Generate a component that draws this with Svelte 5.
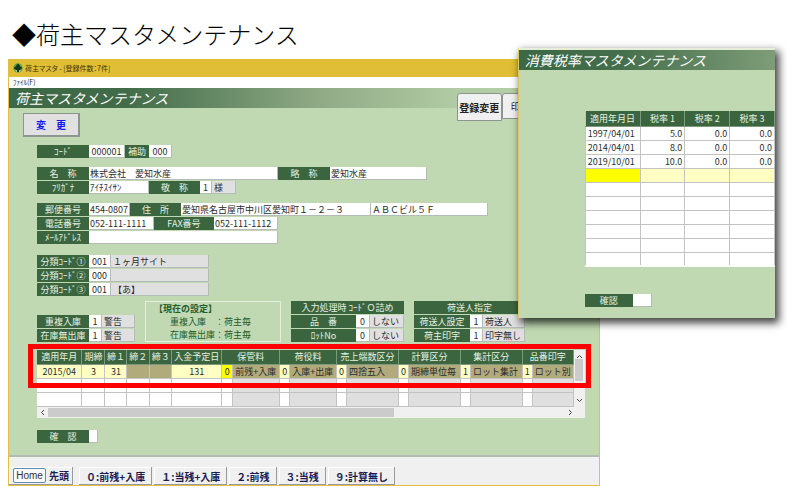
<script lang="ts">
  type Box = { value: string; w: number; grey?: boolean; center?: boolean }
  type Field = { label: string; lw: number; boxes: Box[] }

  const sections: Field[][][] = [
    [
      [
        { label: 'ｺｰﾄﾞ', lw: 52, boxes: [{ value: '000001', w: 36, center: true }] },
        { label: '補助', lw: 24, boxes: [{ value: '000', w: 23, center: true }] },
      ],
    ],
    [
      [
        { label: '名　称', lw: 52, boxes: [{ value: '株式会社　愛知水産', w: 189 }] },
        { label: '略　称', lw: 52, boxes: [{ value: '愛知水産', w: 97 }] },
      ],
      [
        { label: 'ﾌﾘｶﾞﾅ', lw: 52, boxes: [{ value: 'ｱｲﾁｽｲｻﾝ', w: 60 }] },
        { label: '敬　称', lw: 51, boxes: [{ value: '1', w: 12, center: true }, { value: '様', w: 24, grey: true }] },
      ],
    ],
    [
      [
        { label: '郵便番号', lw: 52, boxes: [{ value: '454-0807', w: 41 }] },
        { label: '住　所', lw: 51, boxes: [{ value: '愛知県名古屋市中川区愛知町１－２－３', w: 190 }, { value: 'ＡＢＣビル５Ｆ', w: 117 }] },
      ],
      [
        { label: '電話番号', lw: 52, boxes: [{ value: '052-111-1111', w: 65 }] },
        { label: 'FAX番号', lw: 60, boxes: [{ value: '052-111-1112', w: 64 }] },
      ],
      [{ label: 'ﾒｰﾙｱﾄﾞﾚｽ', lw: 52, boxes: [{ value: '', w: 189 }] }],
    ],
    [
      [{ label: '分類ｺｰﾄﾞ①', lw: 52, boxes: [{ value: '001', w: 22, center: true }, { value: '１ヶ月サイト', w: 98, grey: true }] }],
      [{ label: '分類ｺｰﾄﾞ②', lw: 52, boxes: [{ value: '000', w: 22, center: true }, { value: '', w: 98, grey: true }] }],
      [{ label: '分類ｺｰﾄﾞ③', lw: 52, boxes: [{ value: '001', w: 22, center: true }, { value: '【あ】', w: 98, grey: true }] }],
    ],
  ]

  const stock: Field[] = [
    { label: '重複入庫', lw: 52, boxes: [{ value: '1', w: 13, center: true }, { value: '警告', w: 33, grey: true }] },
    { label: '在庫無出庫', lw: 52, boxes: [{ value: '1', w: 13, center: true }, { value: '警告', w: 33, grey: true }] },
  ]
  const zeroFill: Field[] = [
    { label: '品　番', lw: 65, boxes: [{ value: '0', w: 14, center: true }, { value: 'しない', w: 34, grey: true }] },
    { label: 'ﾛｯﾄNo', lw: 65, boxes: [{ value: '0', w: 14, center: true }, { value: 'しない', w: 34, grey: true }] },
  ]
  const sender: Field[] = [
    { label: '荷送人設定', lw: 56, boxes: [{ value: '1', w: 13, center: true }, { value: '荷送人', w: 42, grey: true }] },
    { label: '荷主印字', lw: 56, boxes: [{ value: '1', w: 13, center: true }, { value: '印字無し', w: 42, grey: true }] },
  ]

  const dates = [
    { head: '適用年月', value: '2015/04' },
    { head: '期締', value: '3' },
    { head: '締１', value: '31' },
    { head: '締２', value: '' },
    { head: '締３', value: '' },
    { head: '入金予定日', value: '131' },
  ]
  const kinds = [
    { head: '保管料', code: '0', name: '前残+入庫' },
    { head: '荷役料', code: '0', name: '入庫+出庫' },
    { head: '売上端数区分', code: '0', name: '四捨五入' },
    { head: '計算区分', code: '0', name: '期締単位毎' },
    { head: '集計区分', code: '1', name: 'ロット集計' },
    { head: '品番印字', code: '1', name: 'ロット別' },
  ]
  const colWidths = [45, 23, 22, 23, 22, 50, 11, 47, 10, 47, 10, 52, 10, 52, 10, 52, 10, 41]
  const total = colWidths.reduce((a, b) => a + b, 0)

  const rates = [
    ['1997/04/01', '5.0', '0.0', '0.0'],
    ['2014/04/01', '8.0', '0.0', '0.0'],
    ['2019/10/01', '10.0', '0.0', '0.0'],
  ]
  const keys = ['０:前残+入庫', '１:当残+入庫', '２:前残', '３:当残', '９:計算無し']
</script>

{#snippet fieldRow(fields: Field[])}
  <div class="row">
    {#each fields as f}
      <label class="field">
        <span class="tag" style:width="{f.lw}px">{f.label}</span>
        {#each f.boxes as b}
          <input type="text" aria-label={f.label} value={b.value} readonly={b.grey} class:grey={b.grey} class:center={b.center} style:width="{b.w}px" />
        {/each}
      </label>
    {/each}
  </div>
{/snippet}

<main>
  <h1>◆荷主マスタメンテナンス</h1>

  <section class="window">
    <div class="titlebar">
      <svg width="10" height="10" viewBox="0 0 20 20" aria-hidden="true">
        <circle cx="10" cy="10" r="9.500" fill="#5da447" />
        <path d="M10 1 L14 5 L13 6 L18 9 L17 12 L14 12 L16 14 H12 V18 H8 V14 H4 L6 12 L3 12 L2 9 L7 6 L6 5 Z" fill="#17371d" />
        <path d="M4 15 L8 15 V18 Z M12 15 L16 15 L12 18 Z" fill="#d5efc8" />
      </svg>
      <span>荷主マスタ - [登録件数：7件]</span>
    </div>
    <div class="menu">ﾌｧｲﾙ(F)</div>
    <header>
      <h2>荷主マスタメンテナンス</h2>
      <div class="tabs">
        <button class="on">登録変更</button>
        <button>印　刷</button>
      </div>
    </header>

    <div class="body">
      <button class="change">変　更</button>
      <div class="form">
        {#each sections as section}
          <div class="group">
            {#each section as fields}
              {@render fieldRow(fields)}
            {/each}
          </div>
        {/each}
      </div>

      <div class="settings">
        <div class="group">
          {#each stock as f}{@render fieldRow([f])}{/each}
        </div>
        <div class="current">
          <strong>【現在の設定】</strong>
          <p>重複入庫　：荷主毎</p>
          <p>在庫無出庫：荷主毎</p>
        </div>
        <div class="group">
          <div class="tag">入力処理時 ｺｰﾄﾞＯ詰め</div>
          {#each zeroFill as f}{@render fieldRow([f])}{/each}
        </div>
        <div class="group">
          <div class="tag">荷送人指定</div>
          {#each sender as f}{@render fieldRow([f])}{/each}
        </div>
      </div>

      <div class="grid">
        <table>
          <colgroup>
            {#each colWidths as w}<col style:width="{(w / total) * 100}%" />{/each}
          </colgroup>
          <thead>
            <tr>
              {#each dates as d}<th>{d.head}</th>{/each}
              {#each kinds as k}<th colspan="2">{k.head}</th>{/each}
            </tr>
          </thead>
          <tbody>
            <tr class="active">
              {#each dates as d}<td class="mid" class:off={!d.value}>{d.value}</td>{/each}
              {#each kinds as k, i}
                <td class="code" class:focus={i === 0}>{k.code}</td>
                <td class="off">{k.name}</td>
              {/each}
            </tr>
            {#each [1, 2] as _}
              <tr>
                {#each dates as _d}<td></td>{/each}
                {#each kinds as _k}<td></td><td class="fill"></td>{/each}
              </tr>
            {/each}
          </tbody>
        </table>
        <div class="vbar">
          <svg width="7" height="5" viewBox="0 0 7 5"><path d="M1 4 L3.500 1.500 L6 4" /></svg>
          <i></i>
          <svg width="7" height="5" viewBox="0 0 7 5"><path d="M1 1 L3.500 3.500 L6 1" /></svg>
        </div>
        <div class="hbar">
          <svg width="5" height="7" viewBox="0 0 5 7"><path d="M4 1 L1.500 3.500 L4 6" /></svg>
          <i></i>
          <svg width="5" height="7" viewBox="0 0 5 7"><path d="M1 1 L3.500 3.500 L1 6" /></svg>
        </div>
        <div class="mark"></div>
      </div>

      {@render fieldRow([{ label: '確　認', lw: 52, boxes: [{ value: '', w: 9 }] }])}
    </div>

    <footer>
      <div class="key home"><button>Home</button><span>先頭</span></div>
      {#each keys as key}
        <button class="key">{key}</button>
      {/each}
    </footer>
  </section>

  <section class="popup">
    <h2>消費税率マスタメンテナンス</h2>
    <div class="inner">
      <table class="rates">
        <thead>
          <tr><th class="date">適用年月日</th><th>税率 1</th><th>税率 2</th><th>税率 3</th></tr>
        </thead>
        <tbody>
          {#each rates as r}
            <tr>{#each r as v}<td>{v}</td>{/each}</tr>
          {/each}
          <tr class="new"><td></td><td></td><td></td><td></td></tr>
          {#each Array(6) as _}
            <tr><td></td><td></td><td></td><td></td></tr>
          {/each}
        </tbody>
      </table>
      {@render fieldRow([{ label: '確認', lw: 48, boxes: [{ value: '', w: 19 }] }])}
    </div>
  </section>
</main>

<style>
  :global(body) {
    background: #fff;
  }

  main {
    position: relative;
    font: 9px/13px "Noto Sans CJK JP", sans-serif;
    color: #2c2c2c;
    overflow: hidden;
    padding-bottom: 14px;
  }

  h1, h2, p {
    margin: 0;
    font-weight: 400;
    white-space: nowrap;
  }

  h1 {
    font-size: 24px;
    font-weight: 300;
    line-height: 34px;
    padding: 17px 12px 8px;
    color: #000;
  }

  button, input {
    font: inherit;
    color: inherit;
    box-sizing: border-box;
    margin: 0;
    border-radius: 0;
    white-space: nowrap;
  }

  .window {
    box-sizing: border-box;
    margin-left: 8px;
    width: 75.2%;
    border: 1px solid #e5bf45;
    border-top: 0;
    background: #c0d9b2;
  }

  .titlebar {
    display: flex;
    align-items: center;
    gap: 2px;
    height: 18px;
    padding-left: 4px;
    background: #e0be35;
    font-size: 7px;
    font-feature-settings: "palt";
    color: #40360c;
  }

  .menu {
    height: 11px;
    padding-left: 4px;
    background: #fff;
    font-size: 7px;
    line-height: 11px;
  }

  h2 {
    font-size: 14px;
    font-style: italic;
    line-height: 20px;
    padding-left: 6px;
    color: #fff;
  }

  header {
    position: relative;
    background: linear-gradient(90deg, #3d6845 0, #426c49 20%, #8fa985 52%, #b1cba4 76%, #b7d1aa);
  }

  .tabs {
    position: absolute;
    top: 5px;
    right: 52px;
    display: flex;
    align-items: flex-start;
  }

  .tabs button {
    width: 45px;
    height: 26px;
    padding: 0;
    border: 1px solid #8d948d;
    border-radius: 3px 3px 0 0;
    background: #f0f0f0;
    color: #222;
  }

  .tabs .on {
    height: 28px;
    font-size: 10px;
    font-weight: 700;
  }

  .body {
    padding: 5px 14px 12px 28px;
  }

  .change {
    display: block;
    width: 57px;
    height: 24px;
    margin: 0 0 8px -14px;
    padding: 0;
    border: 1px solid #8e9590;
    border-right-width: 2px;
    border-bottom-width: 2px;
    background: #e1e1e1;
    font-size: 10px;
    font-weight: 700;
    color: #1414f0;
  }

  .form {
    display: flex;
    flex-direction: column;
    gap: 9px;
  }

  .form .group:last-child {
    margin-top: 2px;
  }

  .group {
    display: flex;
    flex-direction: column;
    gap: 1px;
  }

  .row, .field {
    display: flex;
  }

  .tag {
    flex: none;
    height: 13px;
    background: #3a653f;
    color: #e6f1e0;
    text-align: center;
    white-space: nowrap;
  }

  input {
    height: 13px;
    padding: 0 0 0 1px;
    border: 0;
    border-right: 1px solid #b4bcb8;
    border-bottom: 1px solid #b4bcb8;
    background: #fff;
    outline: none;
  }

  input.grey {
    background: #e0e0e0;
    padding-left: 2px;
  }

  input.center {
    padding: 0;
    text-align: center;
  }

  .settings {
    display: flex;
    align-items: flex-end;
    gap: 10px;
    margin: 5px 0 8px;
  }

  .current {
    box-sizing: border-box;
    width: 136px;
    border: 1px solid #e4efdc;
    border-top: 0;
    padding-left: 8px;
    color: #245c2c;
    box-shadow: 0 -1px #e4efdc;
  }

  .current strong {
    display: block;
  }

  .current p {
    padding-left: 16px;
  }

  table {
    width: 100%;
    table-layout: fixed;
    border-spacing: 0;
    border-collapse: collapse;
    background: #fff;
  }

  th, td {
    box-sizing: border-box;
    height: 14px;
    padding: 0 2px;
    border-right: 1px solid #c3c3c3;
    border-bottom: 1px solid #c3c3c3;
    line-height: 13px;
    white-space: nowrap;
    overflow: hidden;
  }

  th {
    padding: 0;
    background: #3a653f;
    color: #e6f1e0;
    font-weight: 400;
    border-color: #7d997e;
  }

  .grid {
    position: relative;
    display: grid;
    grid-template-columns: 1fr 11px;
    margin-bottom: 12px;
  }

  .active td {
    background: #ffffc4;
  }

  td.mid {
    text-align: center;
  }

  .active .off {
    background: #b1ab7c;
  }

  td.code {
    padding: 0;
    text-align: center;
  }

  .active .focus {
    background: #ffff00;
  }

  .fill {
    background: #dfdfdf;
  }

  .vbar, .hbar {
    display: flex;
    align-items: center;
    background: #f0f0f0;
  }

  .vbar {
    flex-direction: column;
    padding: 4px 0;
  }

  .vbar i {
    width: 8px;
    height: 22px;
    margin-bottom: auto;
    background: #cbcbcb;
  }

  .hbar {
    grid-column: 1 / 3;
    height: 11px;
    padding: 0 12px 0 3px;
  }

  .hbar i {
    width: 65%;
    height: 9px;
    margin: 0 auto 0 3px;
    background: #cbcbcb;
  }

  .vbar path, .hbar path {
    fill: none;
    stroke: #444;
  }

  .mark {
    position: absolute;
    inset: -6px -6px 30px -9px;
    border: 5px solid #fe0000;
    pointer-events: none;
  }

  footer {
    display: flex;
    gap: 2px;
    padding-top: 10px;
    border-top: 2px solid #b4bbb1;
    background: #f0f0f0;
  }

  .key {
    height: 18px;
    padding: 2px 6px 0 7px;
    border: 0;
    border-right: 1px solid #999;
    border-bottom: 1px solid #999;
    background: #f0f0f0;
    box-shadow: inset 1px 1px #fff;
    font-size: 10px;
    font-weight: 700;
    color: #1c1c52;
  }

  .home {
    box-sizing: border-box;
    display: flex;
    align-items: center;
    gap: 3px;
    padding: 0 3px 0 4px;
    margin-right: 4px;
  }

  .home button {
    width: 33px;
    height: 15px;
    padding: 0;
    border: 1px solid #5f8dab;
    border-radius: 2px;
    background: #fafafa;
    font: 10px/13px "Liberation Sans", sans-serif;
    color: #333;
  }

  .popup {
    box-sizing: border-box;
    position: absolute;
    top: 48px;
    right: 12px;
    width: 32.7%;
    height: 270px;
    border-left: 1px solid #d9c46a;
    border-top: 2px solid #e6edd9;
    background: #c0d9b2;
    box-shadow: 3px 4px 8px 1px rgba(0, 0, 0, 0.75);
  }

  .popup h2 {
    background: linear-gradient(90deg, #3d6845 0, #456f4c 40%, #7f9c78);
  }

  .inner {
    padding: 41px 0 0 66px;
  }

  .rates {
    margin-bottom: 27px;
    border-left: 1px solid #c3c3c3;
    border-bottom: 2px solid #fff;
  }

  .rates th {
    height: 15px;
  }

  .rates .date {
    width: 29%;
  }

  .rates td {
    text-align: right;
  }

  .rates td:first-child {
    text-align: left;
  }

  .new td {
    background: #ffffc4;
  }

  .new td:first-child {
    background: #ffff00;
  }
</style>
